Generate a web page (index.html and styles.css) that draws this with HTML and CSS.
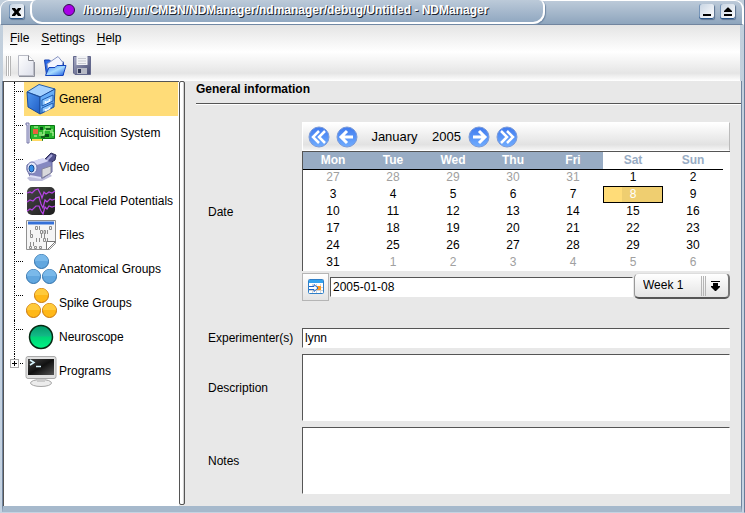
FILE: index.html
```html
<!DOCTYPE html>
<html lang="en">
<head>
<meta charset="utf-8">
<title>Untitled - NDManager</title>
<link rel="stylesheet" href="styles.css">
</head>
<body>
<div class="window">
  <header class="titlebar">
    <button class="win-btn" aria-label="Close"><svg width="15" height="15" viewBox="0 0 15 15"><path d="M3 4h3l1.500 2L9 4h3v1L9.500 8 12 11v1H9l-1.500-2L6 12H3v-1l2.500-3L3 5z"/></svg></button>
    <div class="title-tab">
      <svg width="14" height="14" viewBox="0 0 14 14"><circle cx="7" cy="7" r="5.500" fill="#a800e8" stroke="#30104a"/></svg>
      <span>/home/lynn/CMBN/NDManager/ndmanager/debug/Untitled - NDManager</span>
    </div>
    <div class="win-right">
      <button class="win-btn" aria-label="Minimize"><svg width="15" height="15" viewBox="0 0 15 15"><path d="M4 10h8v2H4z"/></svg></button>
      <button class="win-btn" aria-label="Maximize"><svg width="15" height="15" viewBox="0 0 15 15"><path d="M4 10h8v2H4zM4 8V7l3.500-3.500h1L12 7v1z"/></svg></button>
    </div>
  </header>

  <div class="bars">
    <nav class="menu">
      <button><u>F</u>ile</button>
      <button><u>S</u>ettings</button>
      <button><u>H</u>elp</button>
    </nav>
    <div class="toolbar">
      <span class="grip"></span>
      <button aria-label="New"><svg width="24" height="24" viewBox="0 0 24 24">
        <defs><linearGradient id="paper" x2="1" y2="1"><stop stop-color="#fff"/><stop offset="1" stop-color="#dcdfea"/></linearGradient></defs>
        <path d="M3.500 1.500h10l5 5v15h-15z" fill="url(#paper)" stroke="#b9bbc5"/><path d="M4 22.500h15.500V8" fill="none" stroke="#8d909b"/><path d="M13.500 1.500v5h5" fill="#fff" stroke="#85878f"/></svg></button>
      <button aria-label="Open"><svg width="24" height="24" viewBox="0 0 24 24">
        <defs><linearGradient id="folder" x2="1" y2="1"><stop stop-color="#3c80f4"/><stop offset=".5" stop-color="#a8dcff"/><stop offset="1" stop-color="#1658e0"/></linearGradient></defs>
        <path d="M1.500 6h5l2 2h12v13h-17z" fill="#2c6ce8" stroke="#153fae"/><path d="M4 10l11-7.500 5 6L18 15H5z" fill="#f4f6ff" stroke="#8895c2"/><path d="M2.500 21.500L6 13.500h6l2-2h9l-3 10z" fill="url(#folder)" stroke="#1645bd"/></svg></button>
      <button aria-label="Save"><svg width="24" height="24" viewBox="0 0 24 24">
        <defs><linearGradient id="disk" x2="1" y2="1"><stop stop-color="#a9acc5"/><stop offset="1" stop-color="#444970"/></linearGradient></defs>
        <path d="M2.500 2.500h17v18H4l-1.500-1.500z" fill="url(#disk)" stroke="#63688c"/><path d="M5.500 2h11v9h-11z" fill="#f2f3f6"/><path d="M7 4.500h8M7 7h8M7 9.500h8" stroke="#c9cbd2"/><path d="M6 14h10v6H6z" fill="#b6b9c5"/><path d="M7 15h3v4H7z" fill="#303654"/></svg></button>
    </div>
  </div>

  <main class="main">
    <ul class="tree">
      <li><a class="row selected" href="#general"><svg width="32" height="32" viewBox="0 0 32 32">
        <defs><linearGradient id="side" x2="1" y2="1"><stop stop-color="#4f97f0"/><stop offset="1" stop-color="#1f5cc4"/></linearGradient></defs>
        <path d="M2 9L14 1.500 30 6l-14 8z" fill="#a5d2ff" stroke="#235ba8"/><path d="M2 9l13 5v17L3 24z" fill="url(#side)" stroke="#1b4c9b"/><path d="M15 14l15-8-1 18-14 7z" fill="#67aef8" stroke="#1b4c9b"/><path d="M17 17l11-5v6l-11 5zM17 25l11-5v4l-11 6z" fill="#8bc6ff" stroke="#1c58ae"/><path d="M20.500 18v2l4-2v-2M20.500 26v1.500l4-2v-1.500" fill="none" stroke="#f2faff" stroke-width="1.500"/></svg>General</a></li>
      <li><a class="row" href="#acquisition"><svg width="32" height="32" viewBox="0 0 32 32">
        <path d="M1 6h3v20H2V8H1z" fill="#d9dcf2" stroke="#7879a8"/><path d="M5.500 8.500h24v13h-12v2h-11v-2h-1z" fill="#27b52d" stroke="#087814"/><path d="M7 22h10v2H7z" fill="#ffd863"/><path d="M8 12h5v5H8z" fill="#e8603c"/><path d="M15 10h3v3h-3zM20 17h4v3h-4z" fill="#064e16"/><path d="M14 18h5v-5h9M9 10h4M20 10h5M14 16h3M25 15h3v4M9 19h3" fill="none" stroke="#d0ffb0"/><path d="M21 12h5M16 20h4" stroke="#15661e" stroke-width="2"/></svg>Acquisition System</a></li>
      <li><a class="row" href="#video"><svg width="32" height="32" viewBox="0 0 32 32">
        <path d="M2 27l5-3 17-2 3 3-10 5H5z" fill="#bdbddb"/><path d="M20 8l6-6 5 2-1 5-8 5z" fill="#51518d" stroke="#30305d"/><path d="M22 9l5-5" stroke="#a8a8da" stroke-width="2"/><path d="M2 14l12-5 13 2v10l-9 6-13-2-3-6z" fill="#8588c0" stroke="#6265a0"/><path d="M5 11l13-4 6 3-12 4z" fill="#d5d6f4"/><ellipse cx="7" cy="17" rx="5" ry="6" fill="#e4e8fb" stroke="#7376ac"/><ellipse cx="6.500" cy="17.500" rx="2.500" ry="3.500" fill="#368ee8" stroke="#194889"/><path d="M17 18l9-3v7l-9 5z" fill="#d8d8dc" stroke="#85859d"/><path d="M5 25l11 2" stroke="#dedff5" stroke-width="2"/></svg>Video</a></li>
      <li><a class="row" href="#lfp"><svg width="32" height="32" viewBox="0 0 32 32">
        <defs><linearGradient id="scope" x2="1" y2="1"><stop stop-color="#484848"/><stop offset="1" stop-color="#1c1c1c"/></linearGradient></defs>
        <rect x="2" y="2" width="28" height="28" rx="5" fill="url(#scope)"/><g fill="none" stroke="#b645e6" stroke-width="1.200"><path d="M2 8l3-1 2 1 3-3 3-1 3 6 1 3 2-6 2 2 3-2 3 1 3-2"/><path d="M2 17l3-2 3 1 3-3 3-1 2 7 2 4 2-8 2 2 3-3 2 1 3-1"/><path d="M2 26l3-2 2 1 4-4 3 0 2 5 2 3 2-7 2 2 2-3 3 1 3-1"/></g></svg>Local Field Potentials</a></li>
      <li><a class="row" href="#files"><svg width="32" height="32" viewBox="0 0 32 32">
        <path d="M1.500 1.500h29v23l-6 6h-23z" fill="#f5f5f5" stroke="#909090"/><path d="M3 2.500h26v3H3z" fill="#3470d8"/><g fill="none" stroke="#8d8d8d"><path d="M14.500 7v4M5.500 11v4M22.500 11v4M16.500 15v4M19.500 15v4M11.500 19v4M14.500 19v4M22.500 19v4M5.500 23v4M8.500 23v4"/><path d="M10.500 7.500h2v3h-2zM24.500 7.500h2v3h-2zM15.500 11.500h2v3h-2zM19 11.500h1.500v3H19zM5.500 15.500h2v3h-2zM18.500 19.500h2v3h-2zM4.500 27.500h2v2h-2zM9.500 27.500h2v2h-2zM14.500 27.500h2v2h-2z"/></g><path d="M21.500 30.500v-8h9l-8 8z" fill="#fff" stroke="#777"/></svg>Files</a></li>
      <li><a class="row" href="#anatomical"><svg width="32" height="32" viewBox="0 0 32 32">
        <g fill="#62a7df" stroke="#2f70aa"><circle cx="16.500" cy="8.500" r="7"/><circle cx="8.500" cy="23.500" r="7"/><circle cx="24.500" cy="23.500" r="7"/></g><path d="M10 8a6 6 0 0 1 13 0zM2 23a6 6 0 0 1 13 0zM18 23a6 6 0 0 1 13 0z" fill="#7ab9ea"/></svg>Anatomical Groups</a></li>
      <li><a class="row" href="#spike"><svg width="32" height="32" viewBox="0 0 32 32">
        <g fill="#ffb818" stroke="#c87609"><circle cx="16.500" cy="8.500" r="7"/><circle cx="8.500" cy="23.500" r="7"/><circle cx="24.500" cy="23.500" r="7"/></g><path d="M10 8a6 6 0 0 1 13 0zM2 23a6 6 0 0 1 13 0zM18 23a6 6 0 0 1 13 0z" fill="#ffca3b"/></svg>Spike Groups</a></li>
      <li><a class="row" href="#neuroscope"><svg width="32" height="32" viewBox="0 0 32 32">
        <defs><linearGradient id="green" x2="0" y2="1"><stop stop-color="#009c68"/><stop offset=".45" stop-color="#14b887"/><stop offset=".5" stop-color="#00d477"/><stop offset="1" stop-color="#00f585"/></linearGradient></defs><circle cx="16" cy="16" r="11.500" fill="url(#green)" stroke="#052a12" stroke-width="1.500"/></svg>Neuroscope</a></li>
      <li class="branch"><button class="expand" aria-label="Expand Programs"></button><a class="row" href="#programs"><svg width="32" height="32" viewBox="0 0 32 32">
        <defs><linearGradient id="screen" x2="1" y2="1"><stop stop-color="#444"/><stop offset=".5" stop-color="#111"/><stop offset="1" stop-color="#555"/></linearGradient></defs>
        <ellipse cx="16" cy="28" rx="10.500" ry="3.500" fill="#ececec" stroke="#a5a5a5"/><path d="M12 23h8v4h-8z" fill="#ccc"/><rect x="1" y="1.500" width="30" height="22" rx="2" fill="#e0e0e0" stroke="#aaa"/><path d="M3 4h26v16H3z" fill="url(#screen)"/><path d="M5 5l4 2.500L5 10M11 11.500h5" fill="none" stroke="#d9f6ff" stroke-width="1.500"/></svg>Programs</a></li>
    </ul>
    <div class="splitter"></div>

    <section class="pane">
      <h1>General information</h1>
      <form class="form">
        <label for="date">Date</label>
        <div class="date">
          <div class="cal-nav">
            <button type="button" aria-label="Previous year"><svg width="22" height="22" viewBox="0 0 22 22"><defs><linearGradient id="ball" x2="0" y2="1"><stop stop-color="#407bee"/><stop offset="1" stop-color="#70adff"/></linearGradient></defs><circle cx="11" cy="11" r="10" fill="url(#ball)" stroke="#7b9bd9"/><path d="M11 5l-6 6 6 6M17 5l-6 6 6 6" fill="none" stroke="#fff" stroke-width="2.500"/></svg></button>
            <button type="button" aria-label="Previous month"><svg width="22" height="22" viewBox="0 0 22 22"><circle cx="11" cy="11" r="10" fill="url(#ball)" stroke="#7b9bd9"/><path d="M11 5l-6 6 6 6M5 11h12" fill="none" stroke="#fff" stroke-width="3"/></svg></button>
            <button type="button" class="month">January</button>
            <button type="button" class="year">2005</button>
            <button type="button" aria-label="Next month"><svg width="22" height="22" viewBox="0 0 22 22"><circle cx="11" cy="11" r="10" fill="url(#ball)" stroke="#7b9bd9"/><path d="M11 5l6 6-6 6M17 11H5" fill="none" stroke="#fff" stroke-width="3"/></svg></button>
            <button type="button" aria-label="Next year"><svg width="22" height="22" viewBox="0 0 22 22"><circle cx="11" cy="11" r="10" fill="url(#ball)" stroke="#7b9bd9"/><path d="M5 5l6 6-6 6M11 5l6 6-6 6" fill="none" stroke="#fff" stroke-width="2.500"/></svg></button>
          </div>
          <div class="cal-body">
            <table>
              <thead><tr><th>Mon</th><th>Tue</th><th>Wed</th><th>Thu</th><th>Fri</th><th class="weekend">Sat</th><th class="weekend">Sun</th></tr></thead>
              <tbody>
                <tr><td class="out">27</td><td class="out">28</td><td class="out">29</td><td class="out">30</td><td class="out">31</td><td>1</td><td>2</td></tr>
                <tr><td>3</td><td>4</td><td>5</td><td>6</td><td>7</td><td class="today">8</td><td>9</td></tr>
                <tr><td>10</td><td>11</td><td>12</td><td>13</td><td>14</td><td>15</td><td>16</td></tr>
                <tr><td>17</td><td>18</td><td>19</td><td>20</td><td>21</td><td>22</td><td>23</td></tr>
                <tr><td>24</td><td>25</td><td>26</td><td>27</td><td>28</td><td>29</td><td>30</td></tr>
                <tr><td>31</td><td class="out">1</td><td class="out">2</td><td class="out">3</td><td class="out">4</td><td class="out">5</td><td class="out">6</td></tr>
              </tbody>
            </table>
          </div>
          <div class="date-row">
            <button type="button" class="today-btn" aria-label="Go to today"><svg width="16" height="16" viewBox="0 0 16 16"><rect x=".5" y=".5" width="15" height="14" rx="1" fill="#fff" stroke="#2f7fc8"/><path d="M1 1h14v3H1z" fill="#35a4ee"/><path d="M4.500 5v9M8.500 5v9M12.500 5v9M1 8.500h14M1 11.500h14" stroke="#d3d3d3"/><path d="M9 7h4v4H9z" fill="#ff9a20"/><path d="M1 7.500h5v-2l4 3.500-4 3.500v-2H1" fill="#fff" stroke="#1c65c5"/></svg></button>
            <input id="date" class="field" type="text" value="2005-01-08">
            <div class="week">
              <select aria-label="Week"><option>Week 1</option></select>
              <svg width="24" height="20" viewBox="0 0 24 20"><path d="M.500 0v20M2.500 0v20M4.500 0v20" stroke="#b5b5b5"/><path d="M10 5h9v1h-9zM12 7h5v3h2v1l-4 4h-1l-4-4v-1h2z"/></svg>
            </div>
          </div>
        </div>
        <label for="experimenter">Experimenter(s)</label>
        <input id="experimenter" class="field" type="text" value="lynn">
        <label for="description">Description</label>
        <textarea id="description" class="field"></textarea>
        <label for="notes">Notes</label>
        <textarea id="notes" class="field"></textarea>
      </form>
    </section>
  </main>
</div>
</body>
</html>
```
FILE: styles.css
```css
* { box-sizing: border-box; }

body {
  margin: 0;
  background: #c5d3e2;
  color: #000;
  font: 12px/16px "Liberation Sans", Arial, sans-serif;
}

button, input, select, textarea { font: inherit; color: inherit; }
button { padding: 0; border: 0; background: none; }
svg { display: block; flex: none; }
a { color: inherit; text-decoration: none; }

.window {
  display: flex;
  flex-direction: column;
  min-height: 100vh;
  border-right: 1px solid #6a7c98;
  border-bottom: 1px solid #c5d3e2;
  background: linear-gradient(#c2cfdc, #c5d3e2);
}

.titlebar {
  display: flex;
  height: 25px;
  padding: 0 7px 0 8px;
  border-top: 1px solid #fff;
  border-left: 1px solid #fff;
  border-right: 2px solid #fff;
  border-bottom: 1px solid #71859f;
  border-radius: 9px 9px 0 0;
  background: linear-gradient(#bccad9, #8ea5bd);
}

.win-btn {
  width: 15px;
  height: 15px;
  margin-top: 3px;
  border-radius: 2px;
  background: linear-gradient(135deg, #c6d3e2, #fff);
  box-shadow: inset 0 -1px #2a5588, inset 1px 0 #7594b8, 1px 1px 1px #5b7391;
}

.title-tab {
  display: flex;
  align-items: center;
  gap: 7px;
  width: 71%;
  height: 24px;
  margin: -1px 0 0 6px;
  padding: 0 0 3px 30px;
  border: 2px solid #fff;
  border-top: 0;
  border-radius: 6px 6px 12px 12px;
  background: linear-gradient(#bccad9, #91a8c1);
  box-shadow: 1px 1px 1px #7089a5;
  color: #fff;
  font-weight: bold;
  text-shadow: 1px 1px #1b222b;
  white-space: nowrap;
}

.win-right { display: flex; gap: 6px; margin-left: auto; }

.bars {
  margin: 0 4px 0 3px;
  height: 56px;
  background: linear-gradient(#e4e4e4, #fff 48%, #e5e5e5 86%, #fff);
}

.menu { display: flex; gap: 12px; padding: 5px 7px 8px; }
.menu u { text-underline-offset: 2px; }

.toolbar { display: flex; align-items: center; gap: 4px; padding-left: 3px; }
.grip {
  width: 5px;
  height: 20px;
  background: repeating-linear-gradient(90deg, #b5b5b5 0 1px, #fff 1px 2px);
}

.main {
  display: flex;
  flex: 1;
  margin: 0 2px;
  border-left: 1px solid #71859f;
  border-right: 1px solid #71859f;
  border-bottom: 6px solid #a6b9cc;
  background: #e8e8e8;
}

.tree {
  width: 176px;
  margin: 0;
  padding: 0 1px 0 0;
  border-top: 1px solid #555;
  border-left: 1px solid #555;
  background: #fff;
  list-style: none;
}
.tree li {
  position: relative;
  padding-left: 20px;
}
.tree li::before {
  content: "";
  position: absolute;
  inset: 0 auto 0 10px;
  border-left: 1px dotted #000;
}
.tree li::after {
  content: "";
  position: absolute;
  top: 9px;
  left: 10px;
  width: 9px;
  border-top: 1px dotted #000;
}
.tree .branch::before { bottom: auto; height: 9px; }
.row {
  display: flex;
  align-items: center;
  gap: 2px;
  height: 34px;
  padding-left: 1px;
  white-space: nowrap;
}
.selected { background: #ffdc78; }
.expand {
  position: absolute;
  z-index: 1;
  top: 5px;
  left: 6px;
  width: 9px;
  height: 9px;
  border: 1px solid #aaa;
  background:
    linear-gradient(#000, #000) center / 5px 1px no-repeat,
    linear-gradient(#000, #000) center / 1px 5px no-repeat,
    #fff;
}

.splitter {
  width: 6px;
  margin-bottom: 1px;
  border: 1px solid #555;
  border-radius: 2px;
  background: linear-gradient(90deg, #fff 60%, #bbb);
}

.pane { display: flex; flex: 1; flex-direction: column; min-width: 0; }
h1 {
  margin: 0 0 0 11px;
  padding-bottom: 6px;
  border-bottom: 1px solid #555;
  box-shadow: 0 1px #fff;
  font-size: 12px;
  line-height: 16px;
}

.form {
  display: grid;
  flex: 1;
  grid-template-columns: 88px 1fr;
  grid-template-rows: auto auto 1fr 1fr;
  align-items: center;
  gap: 6px;
  padding: 18px 11px 12px 23px;
}

.field {
  width: 100%;
  height: 20px;
  margin: 0;
  padding: 0 2px;
  border: 1px solid #555;
  border-right-color: #fff;
  border-bottom-color: #fff;
  border-radius: 0;
  background: #fff;
  resize: none;
}
textarea.field { height: 100%; min-height: 60px; }

.form > label[for="date"], .date { margin-bottom: 21px; }

.cal-nav {
  display: flex;
  align-items: center;
  gap: 6px;
  height: 29px;
  padding-left: 5px;
  border: 1px solid #fff;
  border-right-color: #bbb;
  background: linear-gradient(#fff, #e2e2e2 80%, #f4f4f4);
  font-size: 13px;
}
.month { width: 61px; }
.year { width: 31px; }

.cal-body {
  padding-right: 7px;
  border-top: 1px solid #555;
  border-left: 1px solid #555;
  background: #fff;
}
table { width: 100%; border-collapse: collapse; table-layout: fixed; }
th, td { height: 17px; padding: 0; line-height: 15px; text-align: center; }
th { border-bottom: 1px solid #000; background: #98acc4; color: #fff; }
.weekend { background: #fff; color: #98acc4; }
.out { color: #a0a0a0; }
.today {
  background: linear-gradient(90deg, #ffdc78 32%, #efce70 32%);
  color: #fff;
  outline: 1px solid #000;
  outline-offset: -1px;
}

.date-row { display: flex; align-items: center; gap: 1px; padding-top: 2px; }
.today-btn {
  display: grid;
  flex: none;
  place-items: center;
  width: 27px;
  height: 28px;
  border: 1px solid #b5b5b5;
  background: linear-gradient(#fff, #e4e4e4);
}
.date-row .field { flex: 1; min-width: 0; }
.week { position: relative; flex: none; width: 96px; margin-top: -2px; }
.week select {
  appearance: none;
  display: block;
  width: 100%;
  height: 26px;
  padding: 0 26px 2px 8px;
  border: 1px solid #ddd;
  border-left: 1px solid #999;
  border-right: 2px solid #777;
  border-bottom: 2px solid #555;
  border-radius: 5px;
  background: linear-gradient(#fff, #e4e4e4);
}
.week svg {
  position: absolute;
  top: 3px;
  right: 5px;
  pointer-events: none;
}
```
